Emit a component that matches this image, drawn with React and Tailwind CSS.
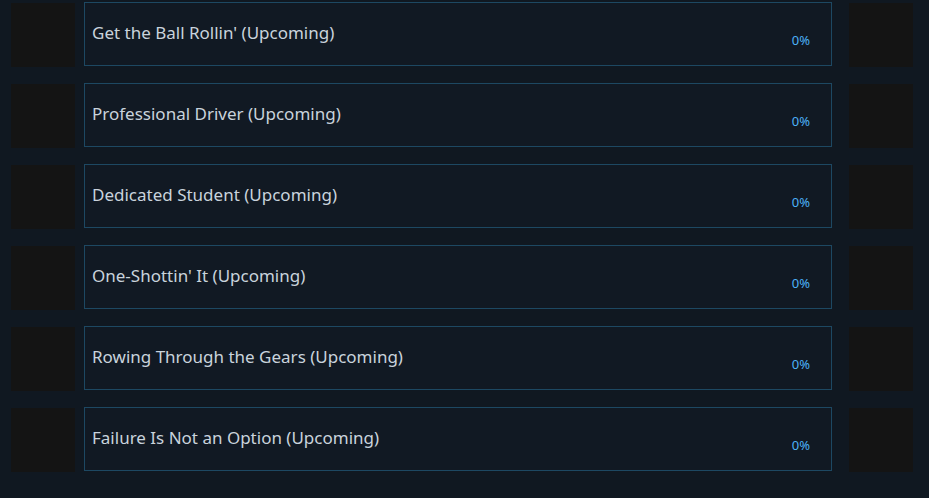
import React from "react";

const items = [
  "Get the Ball Rollin' (Upcoming)",
  "Professional Driver (Upcoming)",
  "Dedicated Student (Upcoming)",
  "One-Shottin' It (Upcoming)",
  "Rowing Through the Gears (Upcoming)",
  "Failure Is Not an Option (Upcoming)",
];

export default function App() {
  return (
    <div className="w-[929px] h-[498px] bg-[#101821] overflow-hidden pt-[2px] flex flex-col gap-[17px]" style={{ fontFamily: '"Noto Sans", "Open Sans", sans-serif' }}>
      {items.map((t) => (
        <div key={t} className="flex items-start h-[64px]">
          <div className="ml-[11px] mt-[1px] w-[64px] h-[64px] bg-[#141414] shrink-0" />
          <div className="ml-[9px] w-[748px] h-[64px] border border-[#1d4862] bg-[#111923] relative shrink-0">
            <div className="absolute left-[7px] top-[18px] text-[17px] leading-[24px] text-[#c9d3dc]">{t}</div>
            <div className="absolute right-[21px] top-[29px] text-[13px] leading-[16px] text-[#4cb1f7]">0%</div>
          </div>
          <div className="ml-[17px] mt-[1px] w-[64px] h-[64px] bg-[#141414] shrink-0" />
        </div>
      ))}
    </div>
  );
}
